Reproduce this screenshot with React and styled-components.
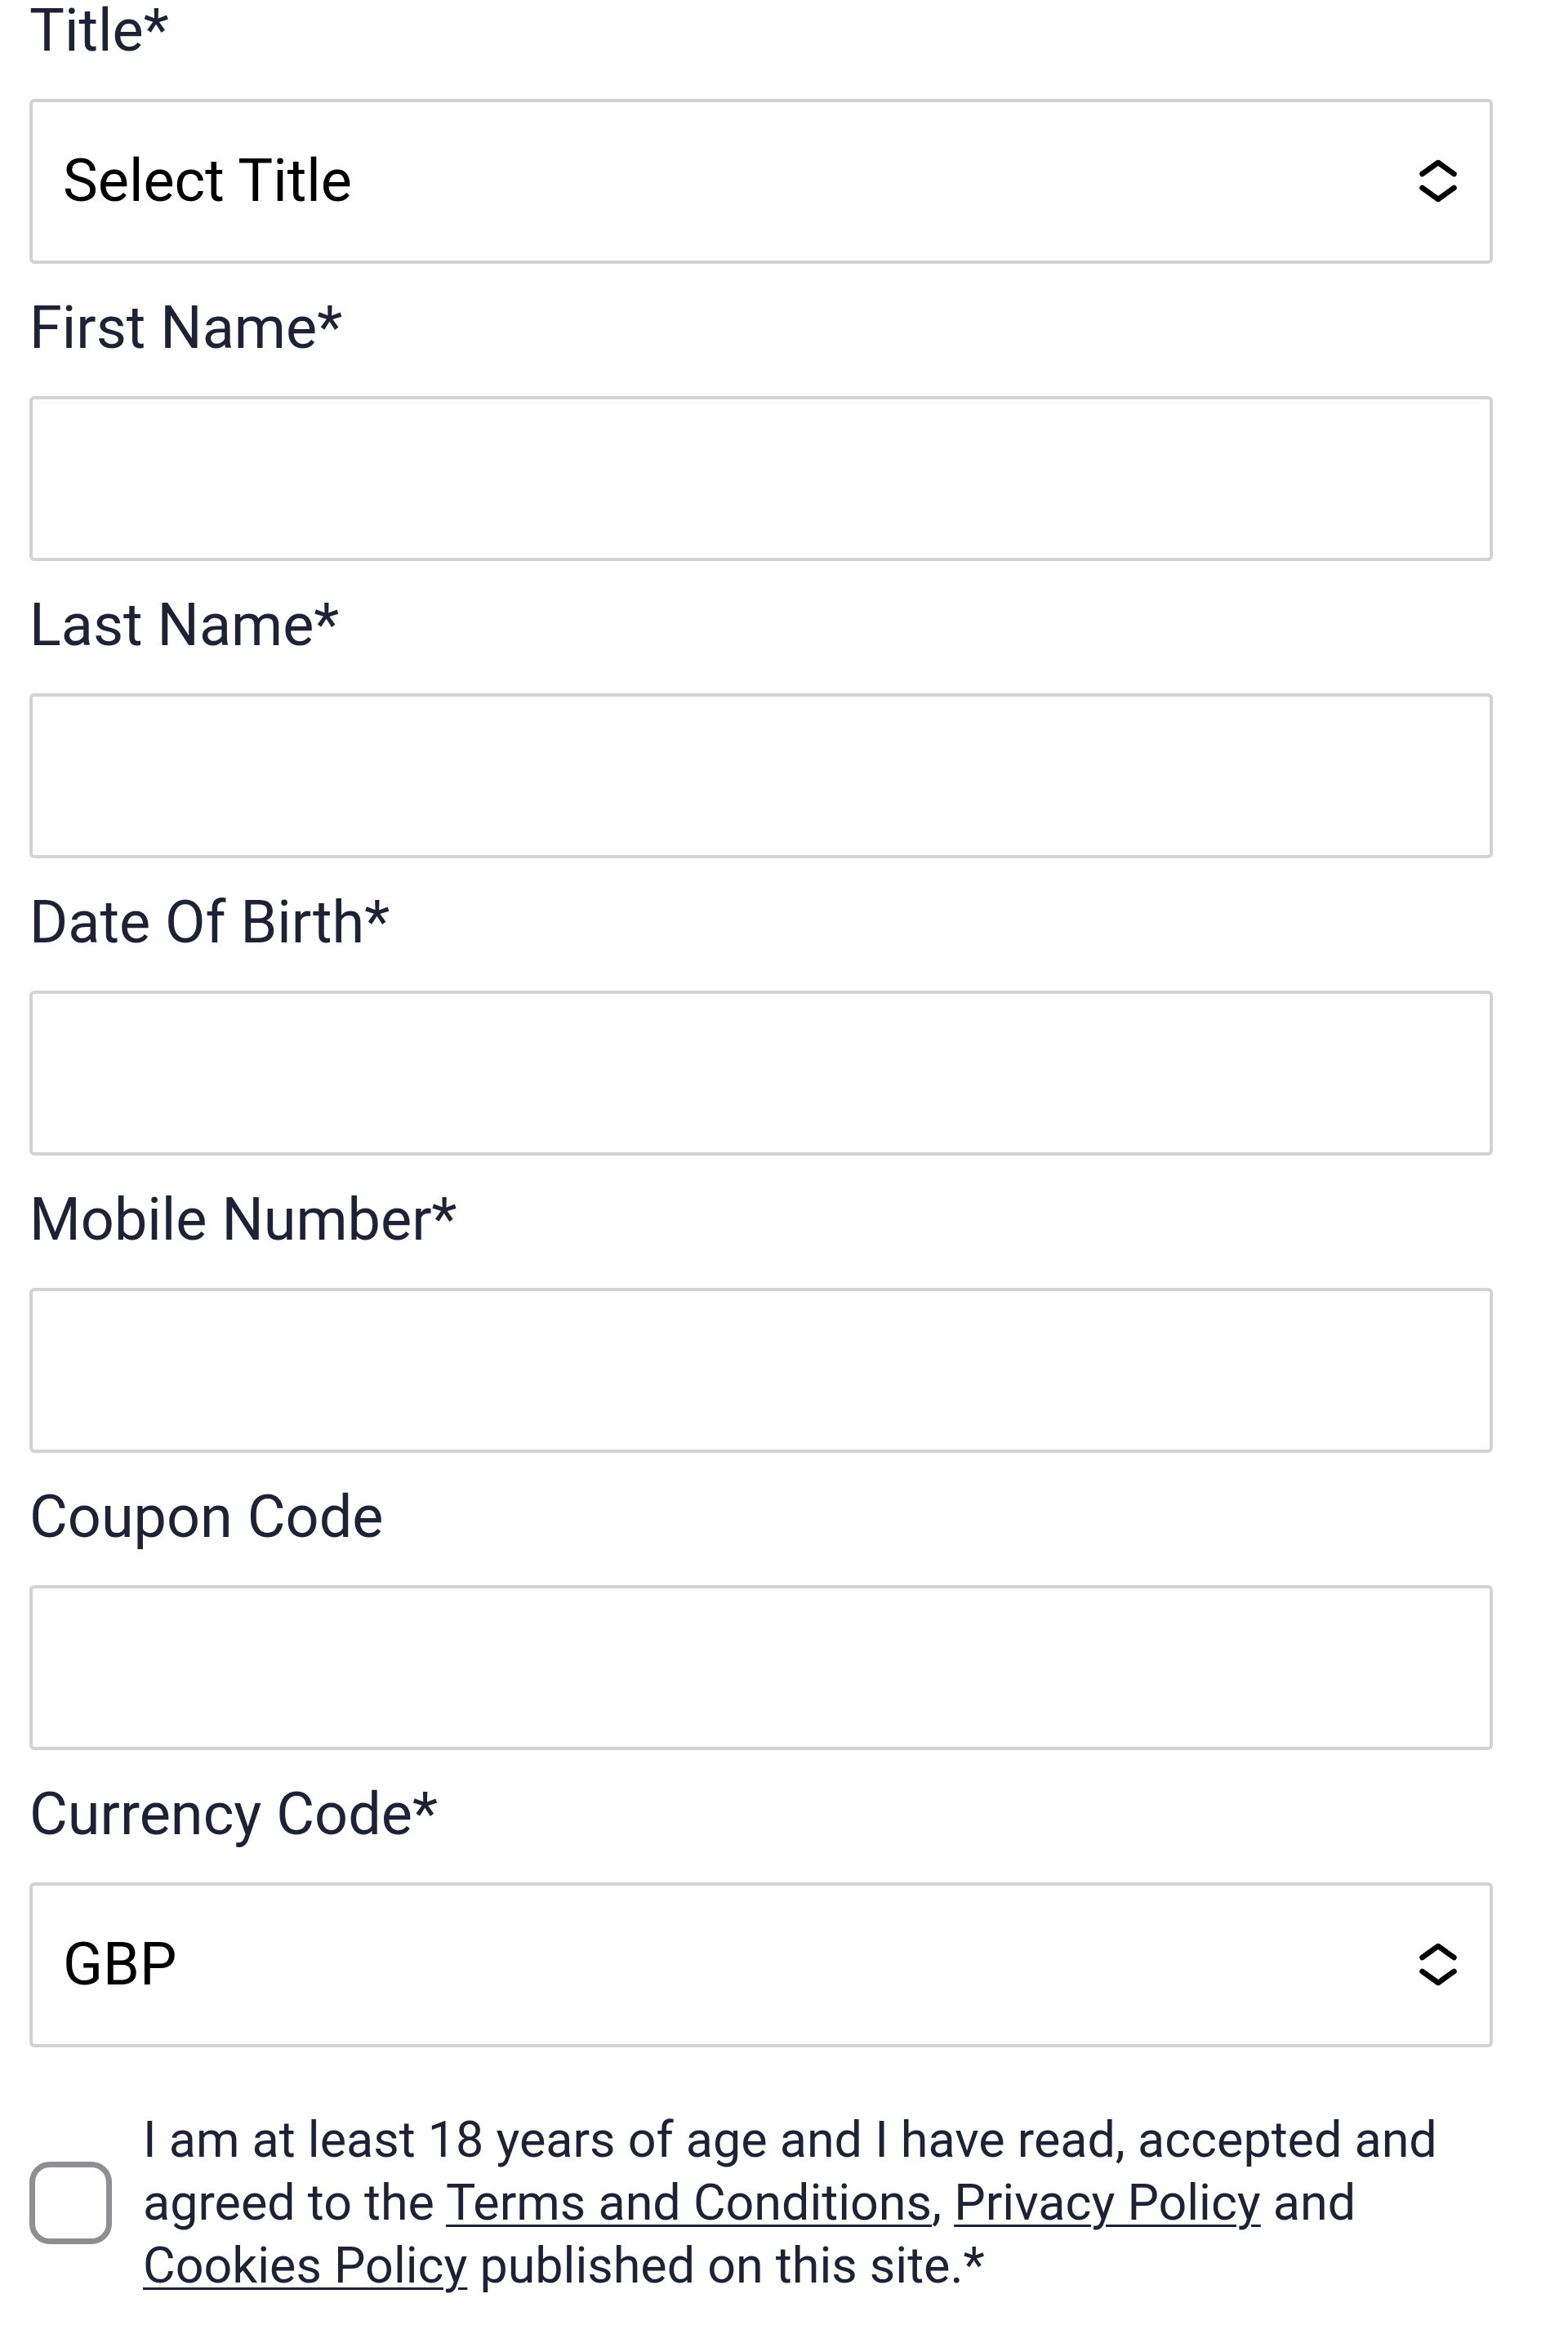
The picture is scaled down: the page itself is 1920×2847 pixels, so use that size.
import React from "react";
import styled, { createGlobalStyle } from "styled-components";

const Global = createGlobalStyle`
  html, body { margin: 0; padding: 0; background: #ffffff; }
  body { font-family: Roboto, "Noto Sans", "Liberation Sans", sans-serif; }
  * { box-sizing: border-box; }
`;

const Form = styled.form`
  display: flex;
  flex-direction: column;
  width: 1828px;
  padding-left: 36px;
`;

const Field = styled.div`
  display: flex;
  flex-direction: column;
  margin-bottom: 41px;
`;

const Label = styled.label`
  display: block;
  font-size: 72px;
  line-height: 76px;
  color: #1f2235;
  margin-bottom: 45px;
`;

const Control = styled.div`
  height: 202px;
  border: 4px solid #d3d3d3;
  border-radius: 6px;
  background: #fff;
  display: flex;
  align-items: center;
  justify-content: space-between;
  padding: 0 39px 0 37px;
`;

const Value = styled.span`
  font-size: 72px;
  color: #000;
  line-height: 1;
`;

const Input = styled.input`
  height: 202px;
  width: 100%;
  border: 4px solid #d3d3d3;
  border-radius: 6px;
  background: #fff;
  font-family: inherit;
  font-size: 72px;
  padding: 0 37px;
  outline: none;
`;

const Consent = styled.div`
  display: flex;
  align-items: center;
  gap: 38px;
  margin-top: 34px;
`;

const Box = styled.span`
  flex: none;
  width: 101px;
  height: 101px;
  border: 7px solid #8e8e93;
  border-radius: 25px;
  background: #fff;
`;

const ConsentText = styled.p`
  margin: 0;
  font-size: 61px;
  line-height: 77px;
  color: #1f2235;
`;

const Link = styled.a`
  color: inherit;
  text-decoration: underline;
  text-decoration-thickness: 3px;
  text-underline-offset: 6px;
`;

const Chevrons = () => (
  <svg width="48" height="54" viewBox="0 0 48 54" fill="none" stroke="#000" strokeWidth="6.5" strokeLinecap="round" strokeLinejoin="round">
    <path d="M4.5 18 L24 4 L43.5 18" />
    <path d="M4.5 35 L24 49 L43.5 35" />
  </svg>
);

const fields = [
  { label: "First Name*" },
  { label: "Last Name*" },
  { label: "Date Of Birth*" },
  { label: "Mobile Number*" },
  { label: "Coupon Code" },
];

export default function App() {
  return (
    <>
      <Global />
      <Form onSubmit={(e) => e.preventDefault()}>
        <Field>
          <Label>Title*</Label>
          <Control>
            <Value>Select Title</Value>
            <Chevrons />
          </Control>
        </Field>
        {fields.map((f) => (
          <Field key={f.label}>
            <Label>{f.label}</Label>
            <Input type="text" />
          </Field>
        ))}
        <Field>
          <Label>Currency Code*</Label>
          <Control>
            <Value>GBP</Value>
            <Chevrons />
          </Control>
        </Field>
        <Consent>
          <Box />
          <ConsentText>
            I am at least 18 years of age and I have read, accepted and agreed to the{" "}
            <Link href="#">Terms and Conditions</Link>, <Link href="#">Privacy Policy</Link> and{" "}
            <Link href="#">Cookies Policy</Link> published on this site.*
          </ConsentText>
        </Consent>
      </Form>
    </>
  );
}
